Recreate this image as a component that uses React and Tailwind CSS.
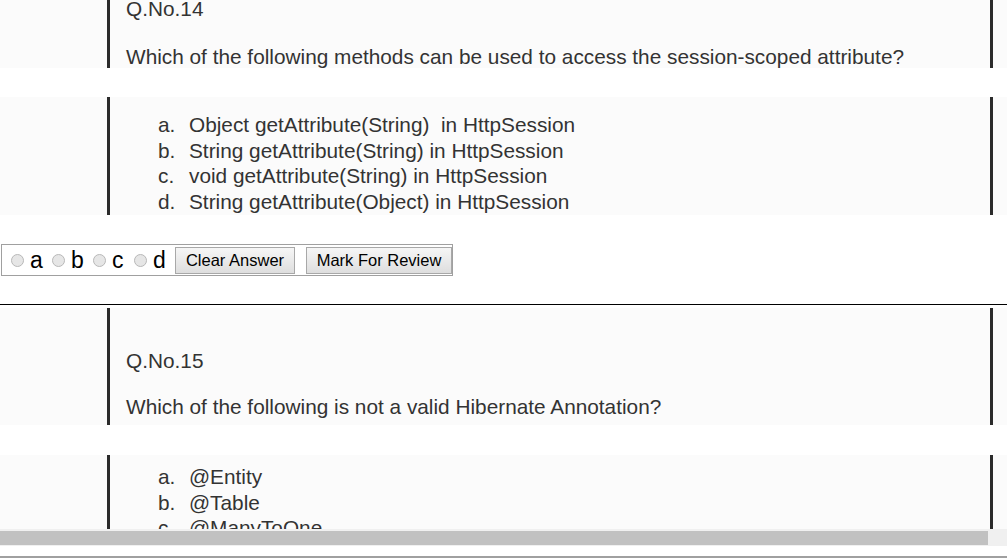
const font = { fontFamily: '"Liberation Sans", Arial, sans-serif' };

const ImgBlock = ({ className, children }) => (
  <div className={`flex bg-[#fbfbfb] ${className}`}>
    <div className="w-[107px] shrink-0" />
    <div className="w-[3px] shrink-0 bg-[#2b2b2b]" />
    <div className="flex-1 relative overflow-hidden">{children}</div>
    <div className="w-[3px] shrink-0 bg-[#2b2b2b]" />
    <div className="w-[14px] shrink-0" />
  </div>
);

const Option = ({ letter, text }) => (
  <div className="flex h-[25.5px] items-center">
    <span className="w-[31px]">{letter}.</span>
    <span className="whitespace-pre">{text}</span>
  </div>
);

const Radio = ({ label }) => (
  <label className="flex items-center">
    <span className="w-[13px] h-[13px] rounded-full border border-[#b8b8b8] bg-[#e6e6e6] mr-[6px]" />
    <span className="w-[22px] text-[23px] leading-none text-black">{label}</span>
  </label>
);

export default function App() {
  return (
    <div className="w-[1007px] h-[560px] bg-white overflow-hidden text-[#333]" style={font}>
      {/* Q14 stem */}
      <ImgBlock className="h-[68px]">
        <div className="absolute left-[16px] top-[-7px] text-[20.8px]">Q.No.14</div>
        <div className="absolute left-[16px] top-[41px] text-[20.8px] whitespace-nowrap">
          Which of the following methods can be used to access the session-scoped attribute?
        </div>
      </ImgBlock>
      <div className="h-[29px]" />
      {/* Q14 options */}
      <ImgBlock className="h-[118px]">
        <div className="pl-[48px] pt-[15px] text-[20.8px]">
          <Option letter="a" text="Object getAttribute(String)  in HttpSession" />
          <Option letter="b" text="String getAttribute(String) in HttpSession" />
          <Option letter="c" text="void getAttribute(String) in HttpSession" />
          <Option letter="d" text="String getAttribute(Object) in HttpSession" />
        </div>
      </ImgBlock>
      <div className="h-[29px]" />
      {/* answer row */}
      <div className="ml-[1px] w-[452px] h-[32px] border border-[#a0a0a0] flex items-center pl-[9px]">
        <Radio label="a" />
        <Radio label="b" />
        <Radio label="c" />
        <Radio label="d" />
        <button className="h-[27px] w-[120px] border border-[#a8a8a8] bg-gradient-to-b from-[#f6f6f6] to-[#dedede] text-[16.5px] text-black">
          Clear Answer
        </button>
        <button className="ml-[11px] h-[27px] w-[146px] border border-[#a8a8a8] bg-gradient-to-b from-[#f6f6f6] to-[#dedede] text-[16.5px] text-black">
          Mark For Review
        </button>
      </div>
      <div className="h-[28px]" />
      <div className="h-[1px] bg-black" />
      <div className="h-[3px]" />
      {/* Q15 stem */}
      <ImgBlock className="h-[117px]">
        <div className="absolute left-[16px] top-[37px] text-[20.8px]">Q.No.15</div>
        <div className="absolute left-[16px] top-[83px] text-[20.8px] whitespace-nowrap">
          Which of the following is not a valid Hibernate Annotation?
        </div>
      </ImgBlock>
      <div className="h-[30px]" />
      {/* Q15 options */}
      <ImgBlock className="h-[74px]">
        <div className="pl-[48px] pt-[9px] text-[20.8px]">
          <Option letter="a" text="@Entity" />
          <Option letter="b" text="@Table" />
          <Option letter="c" text="@ManyToOne" />
        </div>
      </ImgBlock>
      {/* horizontal scrollbar */}
      <div className="h-[17px] bg-[#f0f0f0] flex items-center">
        <div className="w-[988px] h-[14px] bg-[#c1c1c1]" />
      </div>
      <div className="h-[10px]" />
      <div className="h-[2px] bg-[#a0a0a0]" />
    </div>
  );
}
